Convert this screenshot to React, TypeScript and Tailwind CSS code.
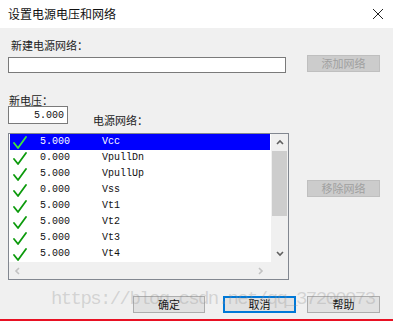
import React from 'react';

const cjk = { fontFamily: '"Noto Sans CJK SC", "Noto Sans", sans-serif' };
const mono = { fontFamily: '"Liberation Mono", "Noto Sans CJK SC", monospace' };

const nets = [
  { v: '5.000', name: 'Vcc' },
  { v: '0.000', name: 'VpullDn' },
  { v: '5.000', name: 'VpullUp' },
  { v: '0.000', name: 'Vss' },
  { v: '5.000', name: 'Vt1' },
  { v: '5.000', name: 'Vt2' },
  { v: '5.000', name: 'Vt3' },
  { v: '5.000', name: 'Vt4' },
];

function Check({ selected }: { selected: boolean }) {
  return (
    <svg width="14" height="14" viewBox="0 0 14 14" className="shrink-0">
      <path
        d="M1 8 L5 13 L13 2"
        fill="none"
        stroke={selected ? '#3ee63e' : '#0c9a0c'}
        strokeWidth="1.8"
        strokeLinejoin="round"
        strokeLinecap="round"
      />
    </svg>
  );
}

function Chevron({ dir, color }: { dir: 'up' | 'down' | 'left' | 'right'; color: string }) {
  const pts =
    dir === 'up' ? '1,5 4,2 7,5' : dir === 'down' ? '1,2 4,5 7,2' : dir === 'left' ? '5,1 2,4 5,7' : '2,1 5,4 2,7';
  return (
    <svg width="8" height="8" viewBox="0 0 8 8">
      <polyline points={pts} fill="none" stroke={color} strokeWidth="1.6" />
    </svg>
  );
}

export default function App() {
  return (
    <div className="relative w-[393px] h-[321px] bg-[#f0f0f0] overflow-hidden flex flex-col text-black" style={cjk}>
      {/* title bar */}
      <div className="h-[28px] bg-white flex items-center justify-between pl-[8px] pr-[10px] shrink-0">
        <span className="text-[12px] leading-[14px] text-[#111]">设置电源电压和网络</span>
        <svg width="10" height="10" viewBox="0 0 10 10">
          <path d="M0 0 L10 10 M10 0 L0 10" stroke="#222" strokeWidth="1" />
        </svg>
      </div>

      <div className="flex flex-col px-[8px] pt-[11px] grow">
        <div className="pl-[3px] text-[11px] leading-[12px] text-[#222]">新建电源网络：</div>

        <div className="flex items-start mt-[4px]">
          <div className="mt-[2px] w-[278px] h-[16px] bg-white border border-[#7a7a7a]" />
          <button className="ml-[21px] w-[73px] h-[17px] bg-[#cccccc] border border-[#bfbfbf] text-[11px] leading-[15px] text-[#a0a0a0]">
            添加网络
          </button>
        </div>

        <div className="flex items-start mt-[21px]">
          <div className="flex flex-col">
            <div className="pl-[1px] text-[11px] leading-[12px] text-[#222]">新电压：</div>
            <div
              className="w-[60px] h-[18px] bg-white border border-[#7a7a7a] flex items-center justify-end pr-[3px] text-[10px] text-[#111]"
              style={mono}
            >
              5.000
            </div>
          </div>
          <div className="ml-[25px] mt-[20px] text-[11px] leading-[12px] text-[#222]">电源网络：</div>
        </div>

        <div className="flex items-start mt-[7px]">
          {/* list box */}
          <div className="w-[281px] h-[147px] border border-[#828790] bg-white flex flex-col">
            <div className="flex h-[128px]">
              <div className="w-[262px] flex flex-col">
                {nets.map((n, i) => {
                  const sel = i === 0;
                  return (
                    <div
                      key={n.name}
                      className={`h-[16px] mx-[1px] flex items-center text-[10px] ${sel ? 'bg-[#0000ff] text-white' : 'text-[#111]'}`}
                      style={mono}
                    >
                      <span className="w-[3px] shrink-0" />
                      <Check selected={sel} />
                      <span className="ml-[13px] w-[62px] shrink-0 leading-[12px]">{n.v}</span>
                      <span className="leading-[12px]">{n.name}</span>
                    </div>
                  );
                })}
              </div>
              {/* vertical scrollbar */}
              <div className="w-[17px] bg-[#f0f0f0] flex flex-col items-center">
                <div className="h-[17px] flex items-center justify-center">
                  <Chevron dir="up" color="#606060" />
                </div>
                <div className="w-[15px] h-[65px] bg-[#cdcdcd]" />
                <div className="grow" />
                <div className="h-[17px] flex items-center justify-center">
                  <Chevron dir="down" color="#606060" />
                </div>
              </div>
            </div>
            {/* horizontal scrollbar */}
            <div className="h-[17px] flex bg-[#f0f0f0]">
              <div className="w-[262px] flex items-center justify-between pl-[5px] pr-[6px]">
                <Chevron dir="left" color="#c2c2c2" />
                <Chevron dir="right" color="#c2c2c2" />
              </div>
              <div className="w-[17px]" />
            </div>
          </div>

          <button className="ml-[18px] mt-[47px] w-[73px] h-[17px] bg-[#cccccc] border border-[#bfbfbf] text-[11px] leading-[15px] text-[#a0a0a0]">
            移除网络
          </button>
        </div>

        <div className="flex items-start mt-[16px] pl-[125px]">
          <button className="w-[72px] h-[17px] bg-[#e1e1e1] border border-[#adadad] text-[11px] leading-[15px] text-[#111]">
            确定
          </button>
          <button className="ml-[18px] w-[73px] h-[17px] bg-[#e1e1e1] border-2 border-[#0078d7] text-[11px] leading-[13px] text-[#111]">
            取消
          </button>
          <button className="ml-[11px] w-[73px] h-[17px] bg-[#e1e1e1] border border-[#adadad] text-[11px] leading-[15px] text-[#111]">
            帮助
          </button>
        </div>
      </div>

      <div className="h-[2px] bg-[#e81123] shrink-0" />

      {/* watermark */}
      <div
        className="absolute left-[51px] top-[288px] text-[19px] leading-[22px] tracking-[-1.6px] text-[rgba(140,140,140,0.3)] pointer-events-none whitespace-nowrap"
        style={mono}
      >
        https://blog.csdn.net/qq_37200073
      </div>
    </div>
  );
}
